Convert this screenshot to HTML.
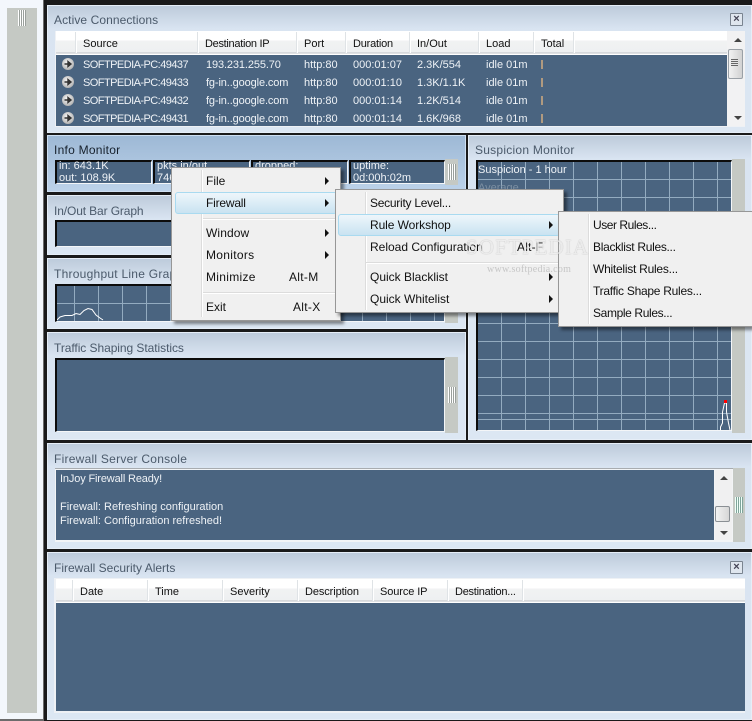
<!DOCTYPE html>
<html><head><meta charset="utf-8"><style>
html,body{margin:0;padding:0;background:#000}
#r{position:relative;width:752px;height:721px;overflow:hidden;background:#1a1a1a;font:11px "Liberation Sans",sans-serif}
#r div,#r span.t,#r svg{position:absolute}
.p{background:linear-gradient(#bccada 0,#d9e4f1 24px,#dce7f3 100%);box-shadow:inset 0 0 0 1px #e6eef7}
.h{font-size:12px;color:#4b5a6b;line-height:14px;white-space:nowrap;letter-spacing:.25px}
.b{background:#4a6480}
.g{background:#c5c9c4}
.w{border-left:2px solid #0c0c0c;border-top:2px solid #0c0c0c;border-right:1px solid #f4f6f8;border-bottom:1px solid #f4f6f8;background:#4a6480;box-sizing:border-box}
.gr{width:8px;height:16px;background:repeating-linear-gradient(90deg,#fff 0 1px,#9aa09c 1px 2px)}
.t{color:#eef2f6;line-height:13px;white-space:nowrap}
.hd{background:linear-gradient(#fff 0,#fff 9px,#f1f2f3 10px,#eef0f1 21px,#bfc3c6 22px,#fff 23px)}
.s{width:1px;height:21px;background:#dfe3e6;border-right:1px solid #fff}
.c{color:#111;line-height:13px;white-space:nowrap}
.x{width:11px;height:11px;border:1px solid #7a8490;background:#dfe6ee;text-align:center;line-height:10px;font-size:11px;font-weight:bold;color:#445;border-radius:1px}
.m{background:#f0f0f0;border:1px solid #979797;box-sizing:border-box;box-shadow:3px 3px 3px rgba(0,0,0,.45)}
.i{font-size:12px;color:#111;line-height:14px;white-space:nowrap}
.ar{width:0;height:0;border-left:4px solid #111;border-top:4px solid transparent;border-bottom:4px solid transparent}
.hl{background:linear-gradient(#eef6fb,#c9e3f1);border:1px solid #a9daf0;border-radius:3px;box-sizing:border-box}
.vs{width:1px;background:#dcdcdc;border-right:1px solid #fff}
.hs{height:1px;background:#dcdcdc;border-bottom:1px solid #fff}
.sc{letter-spacing:-.55px}
.ds{letter-spacing:-.12px}
</style></head><body><div id="r">

<!-- left strip -->
<div style="left:0;top:0;width:43px;height:721px;background:#f3f7fc"></div>
<div class="g" style="left:7px;top:8px;width:30px;height:705px"></div>
<div class="gr" style="left:18px;top:10px"></div>
<div style="left:43px;top:0;width:1px;height:721px;background:#6c6c6c"></div>
<div style="left:0;top:719px;width:44px;height:2px;background:#6c6c6c"></div>

<!-- Active Connections -->
<div class="p" style="left:47px;top:5px;width:705px;height:128px"></div>
<div class="h" style="left:54px;top:13px;letter-spacing:.08px">Active Connections</div>
<div class="x" style="left:730px;top:13px">×</div>
<div style="left:55px;top:31px;width:690px;height:96px;background:#eef1f5"></div>
<div class="hd" style="left:56px;top:31px;width:671px;height:24px"></div>
<div class="s" style="left:75px;top:32px"></div><div class="s" style="left:197px;top:32px"></div><div class="s" style="left:296px;top:32px"></div><div class="s" style="left:345px;top:32px"></div><div class="s" style="left:409px;top:32px"></div><div class="s" style="left:478px;top:32px"></div><div class="s" style="left:533px;top:32px"></div><div class="s" style="left:573px;top:32px"></div>
<span class="t c" style="left:83px;top:38px">Source</span><span class="t c" style="left:205px;top:38px;letter-spacing:-.3px">Destination IP</span><span class="t c" style="left:304px;top:38px">Port</span><span class="t c" style="left:353px;top:38px;letter-spacing:-.2px">Duration</span><span class="t c" style="left:417px;top:38px">In/Out</span><span class="t c" style="left:486px;top:38px">Load</span><span class="t c" style="left:541px;top:38px">Total</span>
<div class="b" style="left:56px;top:55px;width:671px;height:71px"></div>

<svg style="left:61px;top:58px" width="14" height="68" viewBox="0 0 14 68">
<defs><radialGradient id="a" cx=".45" cy=".4" r=".7"><stop offset="0" stop-color="#fafafa"/><stop offset="1" stop-color="#a6a6a6"/></radialGradient></defs>
<g><circle cx="7" cy="6" r="6" fill="url(#a)"/><path d="M3.5 6H8M7 3.5L10 6L7 8.5Z" stroke="#333" stroke-width="1.4" fill="#333"/></g>
<g transform="translate(0,18)"><circle cx="7" cy="6" r="6" fill="url(#a)"/><path d="M3.5 6H8M7 3.500L10 6L7 8.500Z" stroke="#333" stroke-width="1.4" fill="#333"/></g>
<g transform="translate(0,36)"><circle cx="7" cy="6" r="6" fill="url(#a)"/><path d="M3.5 6H8M7 3.500L10 6L7 8.500Z" stroke="#333" stroke-width="1.4" fill="#333"/></g>
<g transform="translate(0,54)"><circle cx="7" cy="6" r="6" fill="url(#a)"/><path d="M3.5 6H8M7 3.500L10 6L7 8.500Z" stroke="#333" stroke-width="1.4" fill="#333"/></g>
</svg>

<span class="t sc" style="left:83px;top:59px">SOFTPEDIA-PC:49437</span><span class="t ds" style="left:206px;top:59px">193.231.255.70</span><span class="t" style="left:304px;top:59px">http:80</span><span class="t" style="left:353px;top:59px">000:01:07</span><span class="t" style="left:417px;top:59px">2.3K/554</span><span class="t" style="left:486px;top:59px">idle 01m</span>
<span class="t sc" style="left:83px;top:77px">SOFTPEDIA-PC:49433</span><span class="t ds" style="left:206px;top:77px">fg-in..google.com</span><span class="t" style="left:304px;top:77px">http:80</span><span class="t" style="left:353px;top:77px">000:01:10</span><span class="t" style="left:417px;top:77px">1.3K/1.1K</span><span class="t" style="left:486px;top:77px">idle 01m</span>
<span class="t sc" style="left:83px;top:95px">SOFTPEDIA-PC:49432</span><span class="t ds" style="left:206px;top:95px">fg-in..google.com</span><span class="t" style="left:304px;top:95px">http:80</span><span class="t" style="left:353px;top:95px">000:01:14</span><span class="t" style="left:417px;top:95px">1.2K/514</span><span class="t" style="left:486px;top:95px">idle 01m</span>
<span class="t sc" style="left:83px;top:113px">SOFTPEDIA-PC:49431</span><span class="t ds" style="left:206px;top:113px">fg-in..google.com</span><span class="t" style="left:304px;top:113px">http:80</span><span class="t" style="left:353px;top:113px">000:01:14</span><span class="t" style="left:417px;top:113px">1.6K/968</span><span class="t" style="left:486px;top:113px">idle 01m</span>
<div style="left:541px;top:60px;width:2px;height:9px;background:#b09a80"></div><div style="left:541px;top:78px;width:2px;height:9px;background:#b09a80"></div><div style="left:541px;top:96px;width:2px;height:9px;background:#b09a80"></div><div style="left:541px;top:114px;width:2px;height:9px;background:#b09a80"></div>
<!-- scrollbar 1 -->
<div style="left:727px;top:31px;width:18px;height:95px;background:#f2f2f3"></div>
<div style="left:734px;top:38px;border-left:4px solid transparent;border-right:4px solid transparent;border-bottom:4px solid #444;width:0;height:0"></div>
<div style="left:734px;top:116px;border-left:4px solid transparent;border-right:4px solid transparent;border-top:4px solid #444;width:0;height:0"></div>
<div style="left:728px;top:49px;width:13px;height:28px;border:1px solid #9aa0a6;border-radius:2px;background:linear-gradient(90deg,#f2f2f2,#d2d2d2)"></div>
<div style="left:731px;top:59px;width:7px;height:7px;background:repeating-linear-gradient(#666 0 1px,#e6e6e6 1px 2px)"></div>

<!-- Info Monitor -->
<div style="left:46px;top:134px;width:421px;height:60px;background:#1a1a1a"></div>
<div style="left:47px;top:135px;width:419px;height:57px;background:linear-gradient(#9db8d5,#bdd3ea);box-shadow:inset 0 0 0 1px #cfe0f2"></div>
<div class="h" style="left:54px;top:143px;color:#16202c">Info Monitor</div>
<div class="w" style="left:55px;top:160px;width:97px;height:24px"></div>
<div class="w" style="left:153px;top:160px;width:97px;height:24px"></div>
<div class="w" style="left:251px;top:160px;width:97px;height:24px"></div>
<div class="w" style="left:349px;top:160px;width:96px;height:24px"></div>
<span class="t" style="left:59px;top:160px;line-height:12px">in: 643.1K<br>out: 108.9K</span>
<span class="t" style="left:157px;top:160px;line-height:12px">pkts.in/out<br>746</span>
<span class="t" style="left:255px;top:160px;line-height:12px">dropped:</span>
<span class="t" style="left:353px;top:160px;line-height:12px">uptime:<br>0d:00h:02m</span>
<div class="g" style="left:445px;top:159px;width:13px;height:26px"></div>
<div class="gr" style="left:448px;top:164px"></div>

<!-- In/Out Bar -->
<div class="p" style="left:47px;top:195px;width:419px;height:60px"></div>
<div class="h" style="left:54px;top:204px;letter-spacing:-.12px">In/Out Bar Graph</div>
<div class="w" style="left:55px;top:220px;width:390px;height:27px"></div>
<div class="g" style="left:445px;top:220px;width:13px;height:27px"></div>
<div class="gr" style="left:448px;top:226px"></div>

<!-- Throughput -->
<div class="p" style="left:47px;top:258px;width:419px;height:71px"></div>
<div class="h" style="left:54px;top:267px">Throughput Line Graph</div>
<div class="w" style="left:55px;top:284px;width:390px;height:38px"></div>
<svg style="left:57px;top:286px" width="388" height="35" viewBox="57 286 388 35">
<path d="M74.5 286V321M98.5 286V321M122.5 286V321M146.5 286V321M170.5 286V321M338.5 286V321M362.5 286V321M386.5 286V321M410.5 286V321M434.5 286V321M57 303.5H445" stroke="#93abc0" stroke-width="1" fill="none"/>
<path d="M57 320L60 317L65 315.500L72 315.500L76 313.500L80 314.500L84 310.500L88 308.500L92 309.500L96 315L100 318L103 320" stroke="#fff" stroke-width="1" fill="none"/></svg>
<div class="g" style="left:445px;top:283px;width:13px;height:40px"></div>

<!-- Traffic -->
<div class="p" style="left:47px;top:332px;width:419px;height:108px"></div>
<div class="h" style="left:54px;top:341px;letter-spacing:-.06px">Traffic Shaping Statistics</div>
<div class="w" style="left:55px;top:358px;width:390px;height:74px"></div>
<div class="g" style="left:445px;top:357px;width:13px;height:76px"></div>
<div class="gr" style="left:448px;top:387px"></div>

<!-- Suspicion -->
<div class="p" style="left:468px;top:135px;width:284px;height:305px"></div>
<div class="h" style="left:475px;top:143px">Suspicion Monitor</div>
<div class="w" style="left:476px;top:160px;width:256px;height:271px"></div>
<svg style="left:478px;top:162px" width="253" height="268" viewBox="478 162 253 268">
<path d="M501.500 162V430M525.500 162V430M549.500 162V430M573.500 162V430M597.500 162V430M621.500 162V430M645.500 162V430M669.500 162V430M693.500 162V430M717.500 162V430M478 179.500H731M478 197.500H731M478 215.500H731M478 233.500H731M478 251.500H731M478 269.500H731M478 287.500H731M478 305.500H731M478 323.500H731M478 341.500H731M478 359.500H731M478 377.500H731M478 395.500H731M478 413.500H731M478 419.500H731" stroke="#93abc0" stroke-width="1" fill="none"/>
<path d="M720.500 430V427L722.500 423V412L724.500 403H726.500V412L728.500 423L730 430" stroke="#fff" stroke-width="1" fill="none"/>
<rect x="724" y="400" width="3" height="3" fill="#f00"/></svg>
<span class="t" style="left:478px;top:164px">Suspicion - 1 hour</span>
<span class="t" style="left:478px;top:182px;color:#7c8fa2">Average</span>
<div class="g" style="left:732px;top:159px;width:13px;height:274px"></div>

<!-- Console -->
<div class="p" style="left:47px;top:443px;width:705px;height:106px"></div>
<div class="h" style="left:54px;top:452px">Firewall Server Console</div>
<div style="left:55px;top:468px;width:678px;height:74px;background:#f2f4f6;border-top:1px solid #a8acb0;box-sizing:border-box"></div>
<div class="b" style="left:56px;top:470px;width:658px;height:70px"></div>
<span class="t" style="left:60px;top:472px;line-height:14px"><span style="letter-spacing:-.15px">InJoy Firewall Ready!</span><br><br>Firewall: Refreshing configuration<br>Firewall: Configuration refreshed!</span>
<div style="left:715px;top:470px;width:17px;height:70px;background:#f0f0f1"></div>
<div style="left:720px;top:476px;border-left:4px solid transparent;border-right:4px solid transparent;border-bottom:4px solid #444;width:0;height:0"></div>
<div style="left:720px;top:531px;border-left:4px solid transparent;border-right:4px solid transparent;border-top:4px solid #444;width:0;height:0"></div>
<div style="left:715px;top:506px;width:13px;height:14px;border:1px solid #8a8f94;border-radius:2px;background:linear-gradient(90deg,#f2f2f2,#d6d6d6)"></div>
<div class="g" style="left:733px;top:468px;width:12px;height:74px"></div>
<div class="gr" style="left:735px;top:497px;background:repeating-linear-gradient(90deg,#f0fff8 0 1px,#7fa49a 1px 2px)"></div>

<!-- Alerts -->
<div class="p" style="left:47px;top:552px;width:705px;height:168px"></div>
<div class="h" style="left:54px;top:561px;letter-spacing:0">Firewall Security Alerts</div>
<div class="x" style="left:730px;top:561px">×</div>
<div style="left:54px;top:578px;width:691px;height:135px;background:#eef1f5"></div>
<div class="hd" style="left:56px;top:579px;width:689px;height:24px"></div>
<div class="s" style="left:72px;top:580px"></div><div class="s" style="left:147px;top:580px"></div><div class="s" style="left:222px;top:580px"></div><div class="s" style="left:297px;top:580px"></div><div class="s" style="left:372px;top:580px"></div><div class="s" style="left:447px;top:580px"></div><div class="s" style="left:522px;top:580px"></div>
<span class="t c" style="left:80px;top:586px">Date</span><span class="t c" style="left:155px;top:586px">Time</span><span class="t c" style="left:230px;top:586px">Severity</span><span class="t c" style="left:305px;top:586px;letter-spacing:-.1px">Description</span><span class="t c" style="left:380px;top:586px;letter-spacing:-.1px">Source IP</span><span class="t c" style="left:455px;top:586px;letter-spacing:-.25px">Destination...</span>
<div class="b" style="left:56px;top:603px;width:689px;height:108px"></div>

<!-- Menu 1 -->
<div class="m" style="left:171px;top:167px;width:170px;height:154px"></div>
<div class="vs" style="left:201px;top:170px;height:147px"></div>
<div class="hl" style="left:175px;top:192px;width:162px;height:22px"></div>
<div class="hs" style="left:203px;top:218px;width:134px"></div>
<div class="hs" style="left:203px;top:292px;width:134px"></div>
<span class="t i" style="left:206px;top:174px">File</span><div class="ar" style="left:325px;top:177px"></div>
<span class="t i" style="left:206px;top:196px;letter-spacing:-.2px">Firewall</span><div class="ar" style="left:325px;top:199px"></div>
<span class="t i" style="left:206px;top:226px;letter-spacing:.1px">Window</span><div class="ar" style="left:325px;top:229px"></div>
<span class="t i" style="left:206px;top:248px;letter-spacing:.3px">Monitors</span><div class="ar" style="left:325px;top:251px"></div>
<span class="t i" style="left:206px;top:270px;letter-spacing:.3px">Minimize</span><span class="t i" style="left:289px;top:270px;letter-spacing:.3px">Alt-M</span>
<span class="t i" style="left:206px;top:300px">Exit</span><span class="t i" style="left:293px;top:300px;letter-spacing:.3px">Alt-X</span>

<!-- Menu 2 -->
<div class="m" style="left:335px;top:189px;width:229px;height:124px"></div>
<div class="vs" style="left:365px;top:192px;height:118px"></div>
<div class="hl" style="left:338px;top:214px;width:222px;height:22px"></div>
<div class="hs" style="left:366px;top:262px;width:194px"></div>
<span class="t i" style="left:370px;top:196px;letter-spacing:-.26px">Security Level...</span>
<span class="t i" style="left:370px;top:218px;letter-spacing:-.08px">Rule Workshop</span><div class="ar" style="left:549px;top:221px"></div>
<span class="t i" style="left:370px;top:240px">Reload Configuration</span><span class="t i" style="left:517px;top:240px;letter-spacing:.2px">Alt-F</span>
<span class="t i" style="left:370px;top:270px">Quick Blacklist</span><div class="ar" style="left:549px;top:273px"></div>
<span class="t i" style="left:370px;top:292px">Quick Whitelist</span><div class="ar" style="left:549px;top:295px"></div>

<!-- Menu 3 -->
<div class="m" style="left:558px;top:211px;width:200px;height:116px"></div>
<div class="vs" style="left:588px;top:214px;height:110px"></div>
<span class="t i" style="left:593px;top:218px;letter-spacing:-.45px">User Rules...</span>
<span class="t i" style="left:593px;top:240px;letter-spacing:-.3px">Blacklist Rules...</span>
<span class="t i" style="left:593px;top:262px;letter-spacing:-.25px">Whitelist Rules...</span>
<span class="t i" style="left:593px;top:284px;letter-spacing:-.27px">Traffic Shape Rules...</span>
<span class="t i" style="left:593px;top:306px;letter-spacing:-.37px">Sample Rules...</span>

<!-- watermark -->
<span class="t" style="left:466px;top:236px;font:21px/22px 'Liberation Serif',serif;letter-spacing:1.1px;color:rgba(255,255,255,.75);text-shadow:0 0 1px rgba(0,0,0,.3)">SOFTPEDIA</span>
<span class="t" style="left:487px;top:264px;font:10px/12px 'Liberation Serif',serif;color:rgba(170,170,170,.6);letter-spacing:.25px">www.softpedia.com</span>
</div></body></html>
